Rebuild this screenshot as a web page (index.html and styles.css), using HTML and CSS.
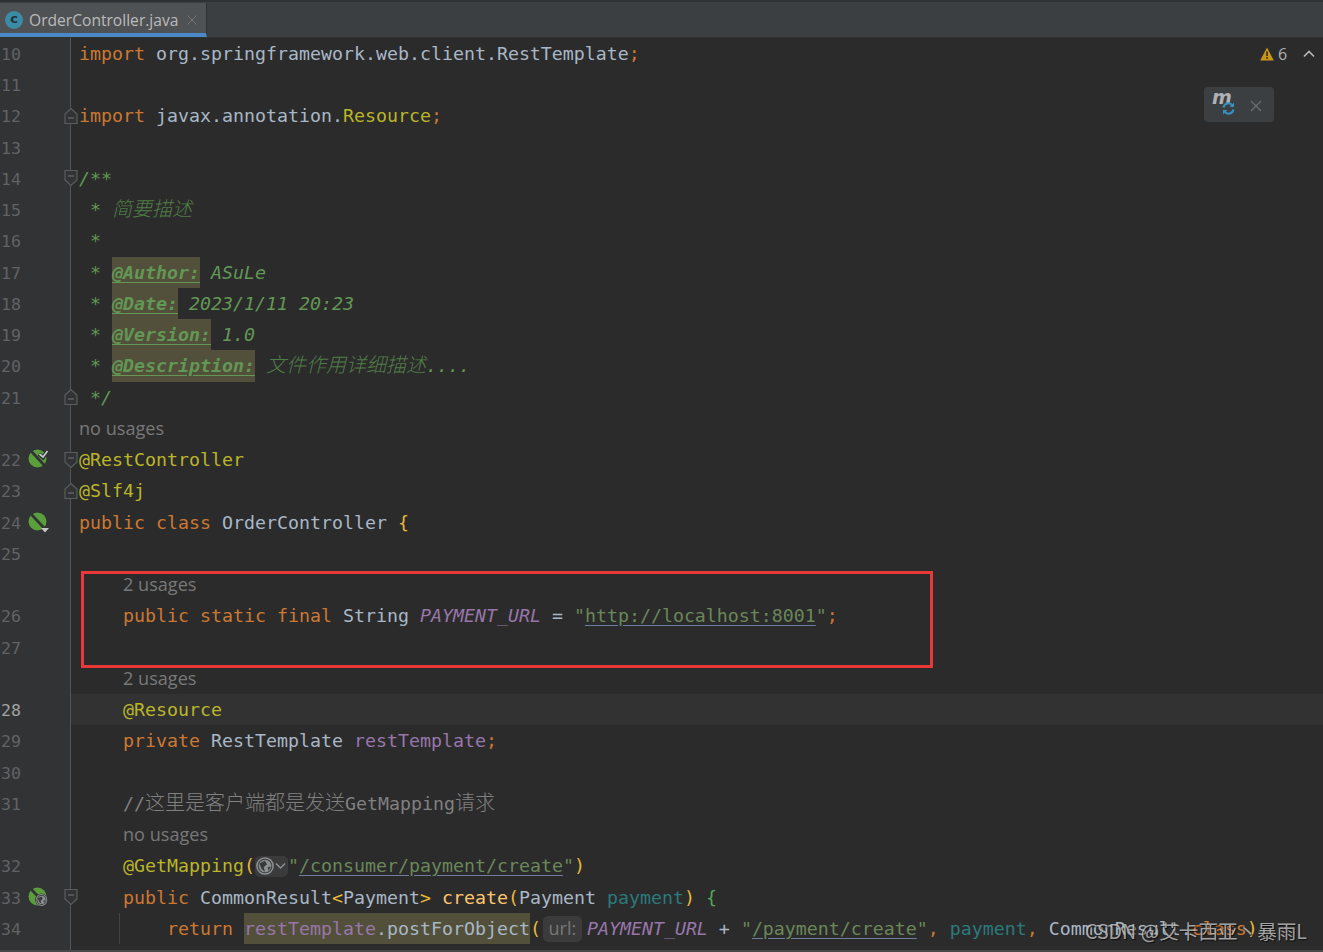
FILE: index.html
```html
<html>
  <head>
    <link rel="stylesheet" href="styles.css">
    <title>OrderController.java</title>
  </head>
  <body>
    <svg class="defs" width="0" height="0">
      <symbol id="foldStart" viewBox="0 0 14 18">
        <path d="M1 1.5H13V11L7 16.5L1 11Z" fill="#313335" stroke="#5a5d5f" stroke-width="1.2"/>
        <path d="M4 7H10" stroke="#6a6d6f" stroke-width="1.2"/>
      </symbol>
      <symbol id="foldEnd" viewBox="0 0 14 18">
        <path d="M1 16.5H13V7L7 1.5L1 7Z" fill="#313335" stroke="#5a5d5f" stroke-width="1.2"/>
        <path d="M4 11H10" stroke="#6a6d6f" stroke-width="1.2"/>
      </symbol>
      <symbol id="bean" viewBox="0 0 20 20">
        <circle cx="9.5" cy="9.5" r="9" fill="#5b9f3c"/>
        <path d="M3.5 2.5L16.5 16.5" stroke="#313335" stroke-width="2.6"/>
      </symbol>
      <symbol id="globe" viewBox="0 0 14 14">
        <circle cx="7" cy="7" r="6.3" fill="none" stroke="#8b9093" stroke-width="1.2"/>
        <circle cx="7" cy="7" r="4.9" fill="#8b9093"/>
        <path d="M2.6 5L6.8 3L8.6 5.6L6 8L7 11.4L4.3 9.4Z" fill="#3a3a3a"/>
        <path d="M9 8L11.3 7.4L10 10.6Z" fill="#3a3a3a"/>
      </symbol>
    </svg>

    <div class="tabBar">
      <div class="tab">
        <span class="tabIcon">c</span>
        <span class="tabName">OrderController.java</span>
        <svg class="tabClose" width="12" height="12" viewBox="0 0 12 12"><path d="M1.5 1.5L10.5 10.5M10.5 1.5L1.5 10.5" stroke="#74777a" stroke-width="1"/></svg>
      </div>
    </div>

    <div class="editor">
      <div class="row"><div class="gutter"><span class="num">10</span></div><div class="code"><span class="kw">import</span> org.springframework.web.client.RestTemplate<span class="kw">;</span></div></div>
      <div class="row"><div class="gutter"><span class="num">11</span></div><div class="code"></div></div>
      <div class="row"><div class="gutter"><span class="num">12</span><svg class="fold"><use href="#foldEnd"/></svg></div><div class="code"><span class="kw">import</span> javax.annotation.<span class="ann">Resource</span><span class="kw">;</span></div></div>
      <div class="row"><div class="gutter"><span class="num">13</span></div><div class="code"></div></div>
      <div class="row"><div class="gutter"><span class="num">14</span><svg class="fold"><use href="#foldStart"/></svg></div><div class="code doc">/**</div></div>
      <div class="row"><div class="gutter"><span class="num">15</span></div><div class="code doc"> * <span class="cjk">简要描述</span></div></div>
      <div class="row"><div class="gutter"><span class="num">16</span></div><div class="code doc"> *</div></div>
      <div class="row"><div class="gutter"><span class="num">17</span></div><div class="code doc"> * <span class="tag"><u>@Author:</u></span> ASuLe</div></div>
      <div class="row"><div class="gutter"><span class="num">18</span></div><div class="code doc"> * <span class="tag"><u>@Date:</u></span> 2023/1/11 20:23</div></div>
      <div class="row"><div class="gutter"><span class="num">19</span></div><div class="code doc"> * <span class="tag"><u>@Version:</u></span> 1.0</div></div>
      <div class="row"><div class="gutter"><span class="num">20</span></div><div class="code doc"> * <span class="tag"><u>@Description:</u></span> <span class="cjk">文件作用详细描述</span>....</div></div>
      <div class="row"><div class="gutter"><span class="num">21</span><svg class="fold"><use href="#foldEnd"/></svg></div><div class="code doc"> */</div></div>
      <div class="row"><div class="gutter"></div><div class="code"><span class="usages">no usages</span></div></div>
      <div class="row">
        <div class="gutter"><span class="num">22</span>
          <svg class="bean" width="22" height="22" viewBox="0 0 22 22"><use href="#bean" width="20" height="20"/><path d="M11 5L15 8.5L20 1.5" fill="none" stroke="#313335" stroke-width="4"/><path d="M11.5 5L15 8L19.5 2" fill="none" stroke="#c4c8ca" stroke-width="1.7"/></svg>
          <svg class="fold"><use href="#foldStart"/></svg></div>
        <div class="code"><span class="ann">@RestController</span></div>
      </div>
      <div class="row"><div class="gutter"><span class="num">23</span><svg class="fold"><use href="#foldEnd"/></svg></div><div class="code"><span class="ann">@Slf4j</span></div></div>
      <div class="row">
        <div class="gutter"><span class="num">24</span>
          <svg class="bean" width="22" height="22" viewBox="0 0 22 22"><use href="#bean" width="20" height="20"/><path d="M13 16H21L17 20.5Z" fill="#c4c8ca"/></svg></div>
        <div class="code"><span class="kw">public class</span> OrderController <span class="gold">{</span></div>
      </div>
      <div class="row"><div class="gutter"><span class="num">25</span></div><div class="code"></div></div>
      <div class="row"><div class="gutter"></div><div class="code">    <span class="usages">2 usages</span></div></div>
      <div class="row"><div class="gutter"><span class="num">26</span></div><div class="code">    <span class="kw">public static final</span> String <span class="field">PAYMENT_URL</span> = <span class="str">"<u>http://localhost:8001</u>"</span><span class="kw">;</span></div></div>
      <div class="row"><div class="gutter"><span class="num">27</span></div><div class="code"></div></div>
      <div class="row"><div class="gutter"></div><div class="code">    <span class="usages">2 usages</span></div></div>
      <div class="row current"><div class="gutter"><span class="num">28</span></div><div class="code">    <span class="ann">@Resource</span></div></div>
      <div class="row"><div class="gutter"><span class="num">29</span></div><div class="code">    <span class="kw">private</span> RestTemplate <span class="member">restTemplate</span><span class="kw">;</span></div></div>
      <div class="row"><div class="gutter"><span class="num">30</span></div><div class="code"></div></div>
      <div class="row"><div class="gutter"><span class="num">31</span></div><div class="code">    <span class="lineComment">//<span class="cjkPlain">这里是客户端都是发送</span>GetMapping<span class="cjkPlain">请求</span></span></div></div>
      <div class="row"><div class="gutter"></div><div class="code">    <span class="usages">no usages</span></div></div>
      <div class="row"><div class="gutter"><span class="num">32</span></div><div class="code">    <span class="ann">@GetMapping</span><span class="gold">(</span><span class="globePill"><svg width="18" height="18"><use href="#globe" width="18" height="18"/></svg><svg width="11" height="8" viewBox="0 0 11 8"><path d="M1 1.5L5.5 6L10 1.5" fill="none" stroke="#8d9194" stroke-width="1.5"/></svg></span><span class="str">"<u>/consumer/payment/create</u>"</span><span class="gold">)</span></div></div>
      <div class="row">
        <div class="gutter"><span class="num">33</span>
          <svg class="bean" width="22" height="22" viewBox="0 0 22 22"><use href="#bean" width="20" height="20"/><circle cx="13.5" cy="13" r="6.5" fill="#313335"/><use href="#globe" x="7.5" y="7" width="12" height="12"/></svg>
          <svg class="fold"><use href="#foldStart"/></svg></div>
        <div class="code">    <span class="kw">public</span> CommonResult<span class="gold">&lt;</span>Payment<span class="gold">&gt;</span> <span class="method">create</span><span class="gold">(</span>Payment <span class="param">payment</span><span class="gold">)</span> <span class="green">{</span></div>
      </div>
      <div class="row guide"><div class="gutter"><span class="num">34</span></div><div class="code">        <span class="kw">return</span> <span class="warn"><span class="member">restTemplate</span>.postForObject</span><span class="gold">(</span><span class="urlPill">url:</span><span class="field">PAYMENT_URL</span> + <span class="str">"<u>/payment/create</u>"</span><span class="kw">,</span> <span class="param">payment</span><span class="kw">,</span> CommonResult.<span class="kw">class</span><span class="gold">)</span></div></div>
      <div class="row"><div class="gutter"></div></div>
    </div>

    <div class="bottomLine"></div>

    <div class="redBox"></div>

    <div class="inspections">
      <svg width="14" height="14" viewBox="0 0 14 14"><path d="M7 .5L13.8 13.5H.2Z" fill="#c9961b"/><path d="M6.2 4.5H7.8V9H6.2ZM6.2 10H7.8V11.7H6.2Z" fill="#2b2b2b"/></svg>
      <span>6</span>
      <svg class="chevron" width="12" height="8" viewBox="0 0 12 8"><path d="M1 6.5L6 1.5L11 6.5" fill="none" stroke="#b4b8ba" stroke-width="1.6"/></svg>
    </div>

    <div class="mavenPopup">
      <span class="mavenMark">m</span>
      <svg class="mavenSync" width="13" height="13" viewBox="0 0 13 13"><path d="M1.5 5.5A5 5 0 0 1 10.5 3.5M11.5 7.5A5 5 0 0 1 2.5 9.5" fill="none" stroke="#3592c4" stroke-width="2"/><path d="M12 .5V5H7.5ZM1 12.5V8H5.5Z" fill="#3592c4"/></svg>
      <svg class="mavenClose" width="12" height="12" viewBox="0 0 12 12"><path d="M1 1L11 11M11 1L1 11" stroke="#6f7274" stroke-width="1.1"/></svg>
    </div>

    <div class="watermark">CSDN @艾卡西亚丶暴雨L</div>
  </body>
</html>
```

FILE: styles.css
```css
* {
  margin: 0;
  padding: 0;
  box-sizing: border-box;
}
html,
body {
  width: 100%;
  height: 100%;
  overflow: hidden;
}
body {
  background-color: rgb(43, 43, 43);
  position: relative;
  display: flex;
  flex-direction: column;
}
.defs {
  position: absolute;
}
.tabBar {
  height: 37.75px;
  flex: none;
  padding-top: 3px;
  background-color: rgb(60, 63, 65);
  border-top: 2px solid rgb(47, 49, 51);
  border-bottom: 1px solid rgb(50, 50, 50);
  display: flex;
}
.tab {
  width: 207px;
  height: 34px;
  margin-top: -2px;
  padding: 4px 8px 0 5px;
  background-color: rgb(78, 82, 84);
  border-bottom: 4px solid rgb(74, 136, 199);
  border-right: 1px solid rgb(50, 50, 50);
  display: flex;
  align-items: center;
}
.tabIcon {
  width: 18px;
  height: 18px;
  flex: none;
  border-radius: 50%;
  background-color: rgb(58, 139, 165);
  color: rgb(35, 50, 60);
  font-family: "DejaVu Sans", sans-serif;
  font-size: 13px;
  font-weight: bold;
  line-height: 16px;
  text-align: center;
}
.tabName {
  margin-left: 6px;
  flex: 1;
  font-family: "Open Sans", sans-serif;
  font-size: 15.6px;
  color: rgb(187, 187, 187);
}
.tabClose {
  flex: none;
}
.editor {
  flex: none;
  display: flex;
  flex-direction: column;
  font-family: "DejaVu Sans Mono", "Noto Sans CJK SC", monospace;
  font-size: 18.27px;
  color: rgb(169, 183, 198);
}
.row {
  height: 31.25px;
  flex: none;
  display: flex;
  position: relative;
}
.gutter {
  width: 71px;
  height: 100%;
  flex: none;
  padding-left: 1px;
  background-color: rgb(49, 51, 53);
  border-right: 1px solid rgb(85, 85, 85);
  position: relative;
  display: flex;
  align-items: center;
}
.num {
  width: 27px;
  flex: none;
  padding-top: 2px;
  font-size: 16.6px;
  color: rgb(96, 99, 102);
}
.bean {
  flex: none;
  margin-top: 1px;
}
.fold {
  position: absolute;
  top: 6.5px;
  right: -8px;
  width: 14px;
  height: 18px;
}
.code {
  flex: 1;
  height: 100%;
  padding-left: 8px;
  line-height: 31.25px;
  white-space: pre;
  overflow: hidden;
}
.current .code {
  background-color: rgb(50, 50, 50);
}
.current .num {
  color: rgb(164, 163, 163);
}
.guide::before {
  content: "";
  position: absolute;
  left: 119px;
  top: 0;
  width: 1px;
  height: 100%;
  background-color: rgb(60, 72, 60);
}
.kw {
  color: rgb(204, 120, 50);
}
.ann {
  color: rgb(187, 181, 41);
}
.gold {
  color: rgb(232, 186, 54);
}
.green {
  color: rgb(84, 168, 87);
}
.method {
  color: rgb(255, 198, 109);
}
.member {
  color: rgb(152, 118, 170);
}
.field {
  color: rgb(152, 118, 170);
  font-style: italic;
}
.param {
  color: rgb(42, 122, 124);
}
.str {
  color: rgb(106, 135, 89);
}
.str u {
  text-decoration-color: rgb(110, 125, 155);
  text-underline-offset: 3px;
}
.doc {
  color: rgb(98, 151, 85);
  font-style: italic;
}
.tag {
  display: inline-block;
  height: 31.25px;
  background-color: rgb(82, 80, 58);
  font-weight: bold;
}
.tag u {
  text-underline-offset: 3px;
}
.cjk {
  font-size: 20px;
  color: rgb(80, 125, 70);
  font-weight: 300;
}
.cjkPlain {
  font-size: 20px;
  font-weight: 300;
}
.lineComment {
  color: rgb(128, 128, 128);
}
.usages {
  font-family: "Open Sans", sans-serif;
  font-size: 18.1px;
  color: rgb(120, 120, 120);
}
.warn {
  display: inline-block;
  height: 31.25px;
  background-color: rgb(82, 80, 58);
}
.globePill {
  display: inline-flex;
  align-items: center;
  width: 33px;
  height: 21px;
  vertical-align: -3px;
  padding-left: 1px;
  gap: 1px;
  border-radius: 5px;
  background-color: rgb(59, 59, 59);
}
.urlPill {
  display: inline-block;
  width: 39px;
  height: 26px;
  margin: 0 5px 0 2px;
  border-radius: 5px;
  background-color: rgb(59, 59, 59);
  font-family: "Open Sans", sans-serif;
  font-size: 18px;
  line-height: 24px;
  color: rgb(120, 120, 120);
  text-align: center;
}
.bottomLine {
  position: absolute;
  left: 0;
  right: 0;
  bottom: 0;
  height: 2px;
  background-color: rgb(70, 72, 74);
}
.redBox {
  position: absolute;
  left: 81px;
  top: 571px;
  width: 852px;
  height: 97px;
  border: 3px solid rgb(234, 56, 56);
}
.inspections {
  position: absolute;
  top: 46px;
  left: 1260px;
  display: flex;
  align-items: center;
  gap: 4px;
  font-family: "Open Sans", sans-serif;
  font-size: 16px;
  line-height: 16px;
  color: rgb(175, 177, 179);
}
.chevron {
  margin-left: 12px;
}
.mavenPopup {
  position: absolute;
  left: 1204px;
  top: 87px;
  width: 70px;
  height: 35px;
  border-radius: 4px;
  background-color: rgb(60, 63, 65);
}
.mavenMark {
  position: absolute;
  left: 8px;
  top: -1px;
  font-family: "DejaVu Sans", sans-serif;
  font-size: 19px;
  font-weight: bold;
  font-style: italic;
  color: rgb(175, 177, 179);
}
.mavenSync {
  position: absolute;
  left: 18px;
  top: 15px;
}
.mavenClose {
  position: absolute;
  left: 46px;
  top: 13px;
}
.watermark {
  position: absolute;
  right: 16px;
  top: 917px;
  font-family: "Noto Sans CJK SC", "Liberation Sans", sans-serif;
  font-size: 19.6px;
  line-height: 28px;
  color: rgba(200, 200, 200, 0.8);
  text-shadow: 1px 1px 1px rgba(0, 0, 0, 0.7);
}
```
